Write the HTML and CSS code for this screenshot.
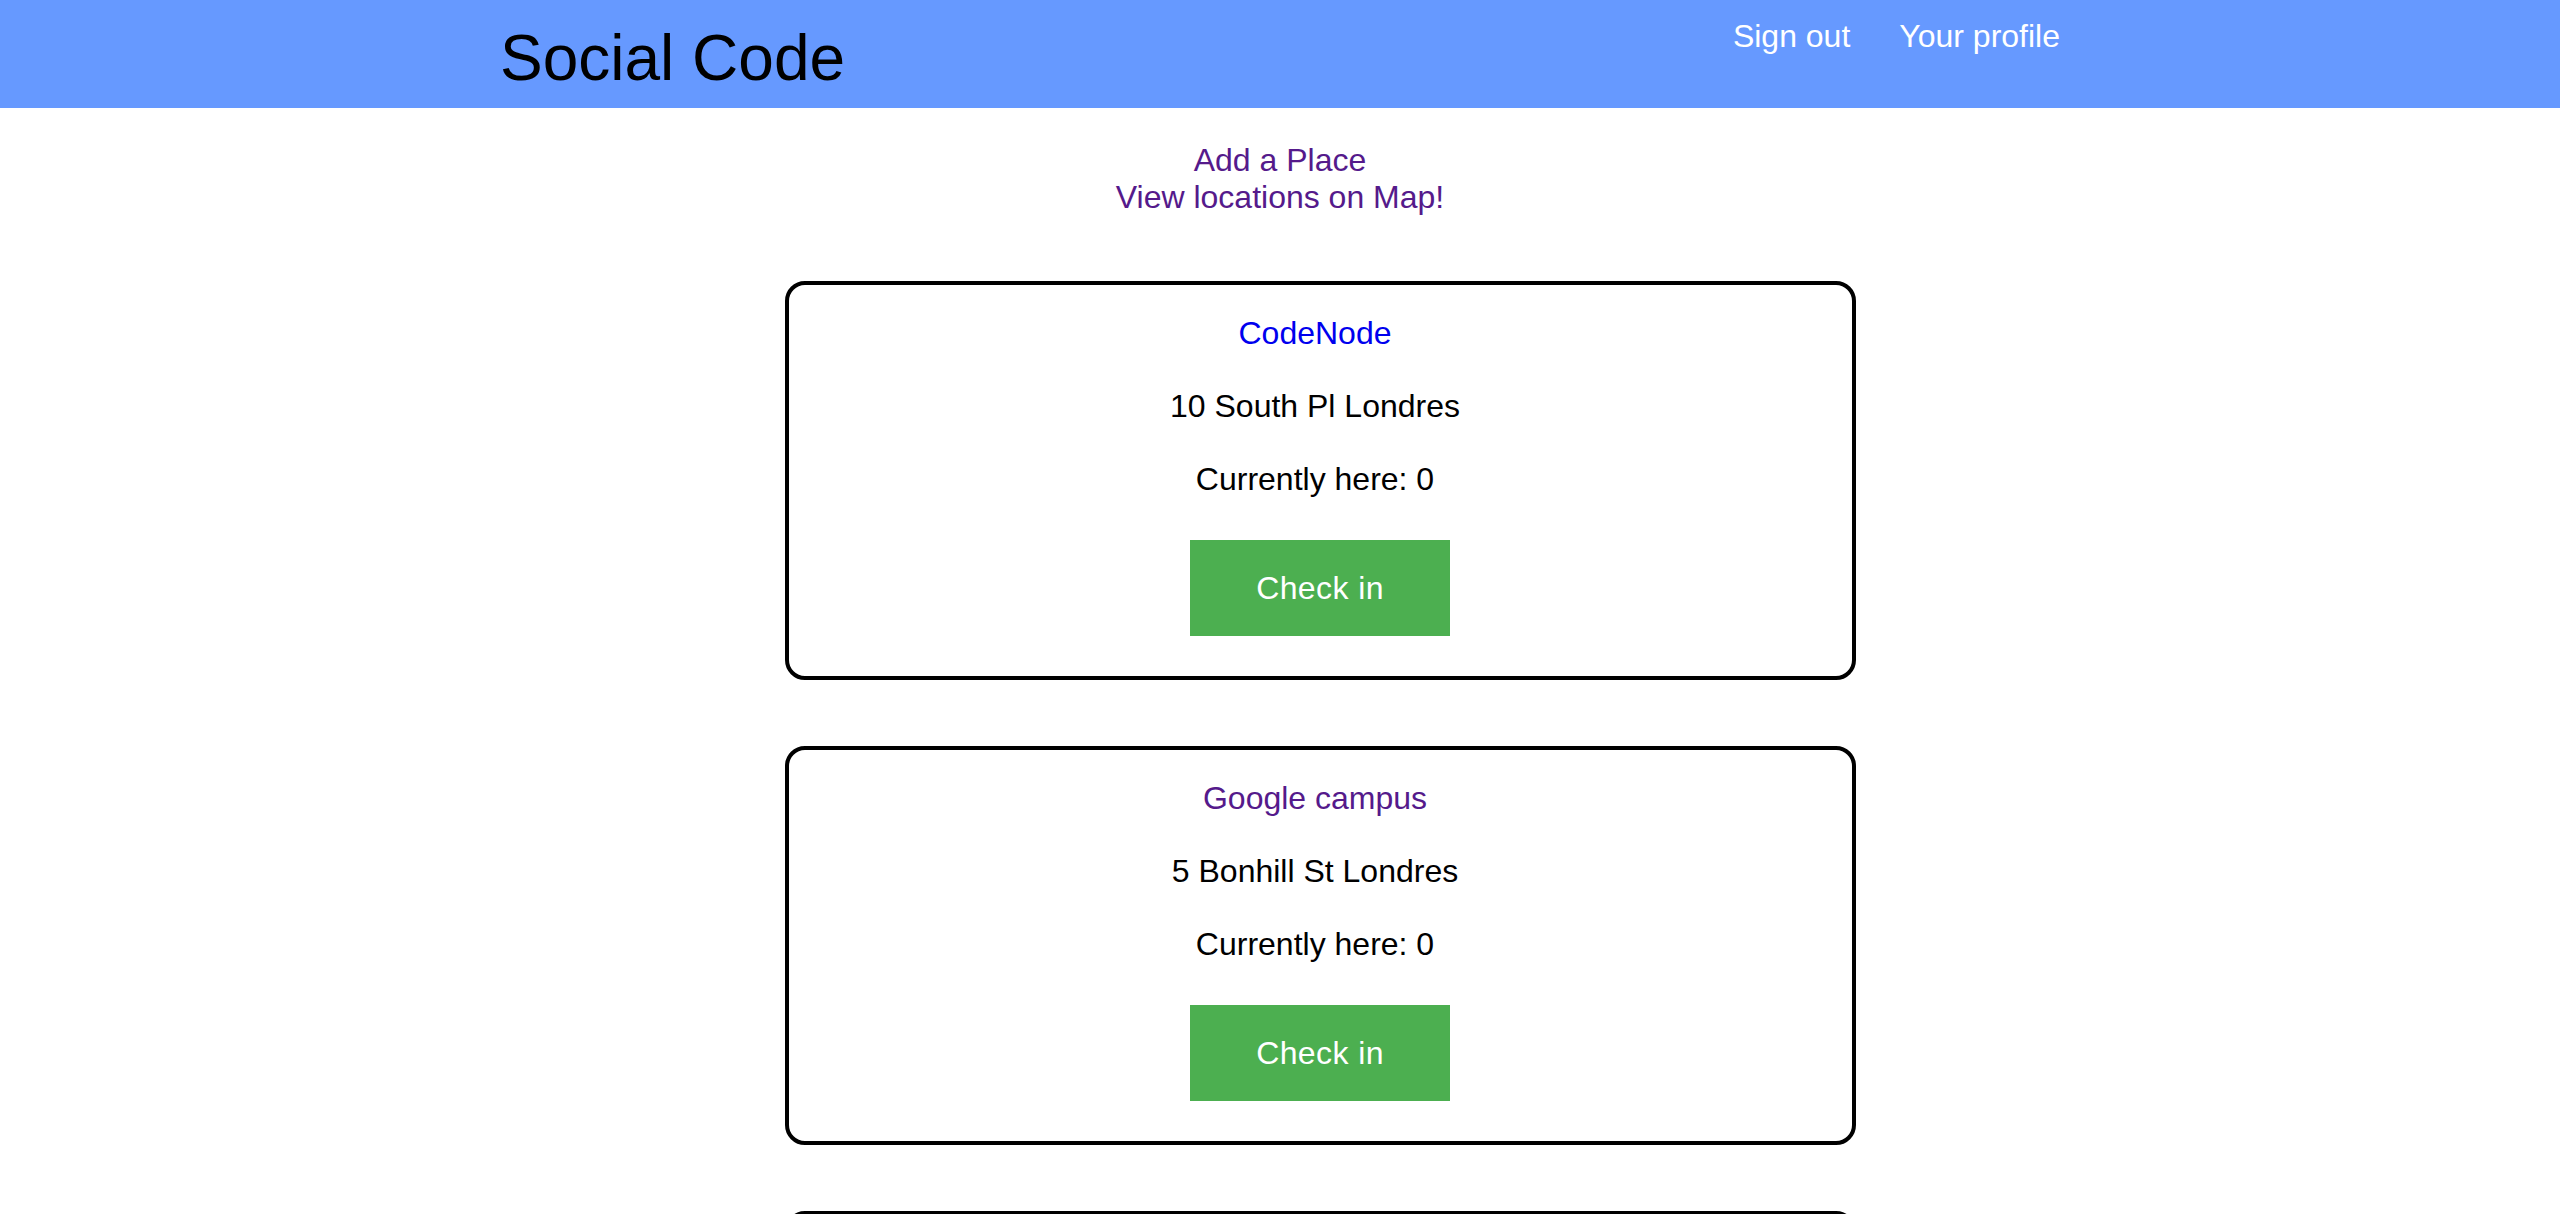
FILE: index.html
```html
<!DOCTYPE html>
<html lang="en">
<head>
<meta charset="utf-8">
<title>Social Code</title>
<link rel="stylesheet" href="styles.css">
</head>
<body>
<header class="topbar">
  <div class="topbar-inner">
    <h1 class="brand">Social Code</h1>
    <nav class="nav">
      <a class="nav-link" href="#">Sign out</a>
      <a class="nav-link" href="#">Your profile</a>
    </nav>
  </div>
</header>
<main class="content">
  <div class="actions">
    <a class="action-link" href="#">Add a Place</a>
    <a class="action-link" href="#">View locations on Map!</a>
  </div>
  <ul class="places">
    <li class="place">
      <a class="place-name" href="#">CodeNode</a>
      <p class="place-address">10 South Pl Londres</p>
      <p class="place-count">Currently here: 0</p>
      <button class="checkin" type="button">Check in</button>
    </li>
    <li class="place">
      <a class="place-name visited" href="#">Google campus</a>
      <p class="place-address">5 Bonhill St Londres</p>
      <p class="place-count">Currently here: 0</p>
      <button class="checkin" type="button">Check in</button>
    </li>
    <li class="place">
      <a class="place-name" href="#">Makers Academy</a>
      <p class="place-address">50 Commercial St Londres</p>
      <p class="place-count">Currently here: 0</p>
      <button class="checkin" type="button">Check in</button>
    </li>
  </ul>
</main>
</body>
</html>
```

FILE: styles.css
```css
html, body {
  margin: 0;
  padding: 0;
  background: #ffffff;
}

body {
  font-family: "Liberation Sans", Arial, Helvetica, sans-serif;
  font-size: 32px;
  color: #000000;
}

.topbar {
  background: #6699ff;
  height: 108px;
}

.topbar-inner {
  width: 1560px;
  margin: 0 auto;
  display: flex;
  justify-content: space-between;
  align-items: flex-start;
}

.brand {
  margin: 0;
  padding-top: 21px;
  font-size: 64px;
  font-weight: normal;
  line-height: 74px;
  color: #000000;
}

.nav {
  display: flex;
  gap: 49px;
  padding-top: 18px;
  line-height: 37px;
}

.nav-link {
  color: #ffffff;
  text-decoration: none;
}

.content {
  padding-top: 34px;
}

.actions {
  display: flex;
  flex-direction: column;
  align-items: center;
  line-height: 37px;
}

.action-link {
  color: #551a8b;
  text-decoration: none;
}

.places {
  list-style: none;
  margin: 65px 0 0 0;
  padding: 0 0 0 80px;
  display: flex;
  flex-direction: column;
  align-items: center;
  gap: 66px;
}

.place {
  box-sizing: border-box;
  width: 1071px;
  border: 4px solid #000000;
  border-radius: 20px;
  padding: 28px 0 40px;
  display: flex;
  flex-direction: column;
  align-items: center;
  text-align: center;
}

.place-name,
.place-address,
.place-count {
  margin-right: 10px;
}

.place-name {
  line-height: 40px;
  color: #0000ee;
  text-decoration: none;
}

.place-name.visited {
  color: #551a8b;
}

.place-address,
.place-count {
  margin-top: 33px;
  margin-bottom: 0;
  margin-left: 0;
  line-height: 40px;
}

.checkin {
  margin-top: 41px;
  width: 260px;
  height: 96px;
  border: none;
  background: #4caf50;
  color: #ffffff;
  font-family: "Liberation Sans", Arial, Helvetica, sans-serif;
  font-size: 32px;
  letter-spacing: 0.4px;
  padding: 0;
  cursor: pointer;
}
```
